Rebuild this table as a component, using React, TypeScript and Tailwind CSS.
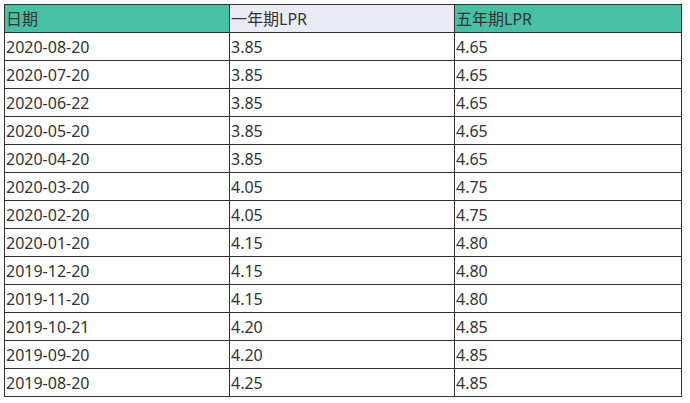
const rows: [string, string, string][] = [
  ["2020-08-20", "3.85", "4.65"],
  ["2020-07-20", "3.85", "4.65"],
  ["2020-06-22", "3.85", "4.65"],
  ["2020-05-20", "3.85", "4.65"],
  ["2020-04-20", "3.85", "4.65"],
  ["2020-03-20", "4.05", "4.75"],
  ["2020-02-20", "4.05", "4.75"],
  ["2020-01-20", "4.15", "4.80"],
  ["2019-12-20", "4.15", "4.80"],
  ["2019-11-20", "4.15", "4.80"],
  ["2019-10-21", "4.20", "4.85"],
  ["2019-09-20", "4.20", "4.85"],
  ["2019-08-20", "4.25", "4.85"],
];

const cell = "border border-[#333] h-[28px] p-0 pl-px text-left align-middle font-normal leading-none";

export default function App() {
  return (
    <div className="w-[690px] h-[403px] bg-white pt-1 pl-1 text-[16px] text-[#333]" style={{ fontFamily: '"Noto Sans", "Noto Sans CJK SC", sans-serif' }}>
      <table className="border-collapse table-fixed w-[677px]">
        <colgroup>
          <col className="w-[225px]" />
          <col className="w-[225px]" />
          <col className="w-[227px]" />
        </colgroup>
        <thead>
          <tr>
            <th className={`${cell} bg-[#46c1a4]`}>日期</th>
            <th className={`${cell} bg-[#ebebf6]`}>一年期LPR</th>
            <th className={`${cell} bg-[#46c1a4]`}>五年期LPR</th>
          </tr>
        </thead>
        <tbody>
          {rows.map((r) => (
            <tr key={r[0]}>
              <td className={cell}>{r[0]}</td>
              <td className={cell}>{r[1]}</td>
              <td className={cell}>{r[2]}</td>
            </tr>
          ))}
        </tbody>
      </table>
    </div>
  );
}
